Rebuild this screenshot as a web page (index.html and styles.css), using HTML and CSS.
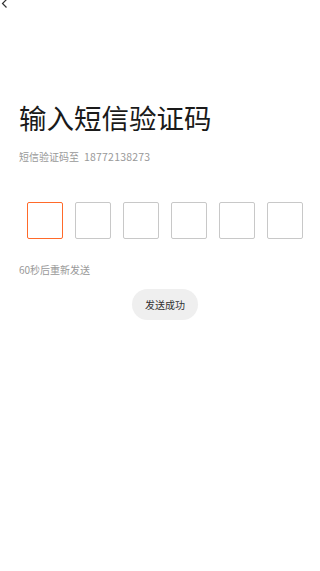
FILE: index.html
```html
<!DOCTYPE html>
<html lang="zh-CN">
<head>
    <meta charset="UTF-8">
    <meta name="viewport" content="width=device-width, initial-scale=1.0">
    <title>输入短信验证码</title>
    <link rel="stylesheet" href="styles.css">
</head>
<body>
    <div class="page">
        <div class="nav">
            <svg class="back" width="8" height="10" viewBox="0 0 8 10">
                <path d="M6.5 0.5 L2.5 4.5 L6.5 8.5" fill="none" stroke="#333" stroke-width="1.2"/>
            </svg>
        </div>
        <h2 class="title">输入短信验证码</h2>
        <p class="hint">短信验证码至<span class="phone">18772138273</span></p>
        <div class="code-row">
            <div class="code-box active"></div>
            <div class="code-box"></div>
            <div class="code-box"></div>
            <div class="code-box"></div>
            <div class="code-box"></div>
            <div class="code-box"></div>
        </div>
        <p class="resend">60秒后重新发送</p>
    </div>
    <div class="toast">发送成功</div>
</body>
</html>
```

FILE: styles.css
```css
body {
    font-family: "Noto Sans CJK SC", "Noto Sans", sans-serif;
    background-color: #fff;
    color: #222;
    margin: 0;
}
.page {
    padding: 0 19px;
}
.nav {
    height: 10px;
    margin: 0 -19px;
}
.back {
    display: block;
    margin-top: -1px;
}
.title {
    font-size: 27.5px;
    font-weight: normal;
    line-height: 40px;
    margin: 88px 0 0;
    color: #1a1a1a;
}
.hint {
    font-size: 10px;
    line-height: 14px;
    color: #999;
    margin: 13px 0 0;
}
.phone {
    margin-left: 5px;
    font-size: 10.5px;
    letter-spacing: 0.2px;
}
.code-row {
    display: flex;
    gap: 12px;
    padding-left: 8px;
    margin: 38px -19px 0 0;
}
.code-box {
    flex-shrink: 0;
    width: 34px;
    height: 35px;
    border: 1px solid #c8c8c8;
    border-radius: 2px;
}
.code-box.active {
    border-color: #ff6a2a;
}
.resend {
    font-size: 10px;
    line-height: 14px;
    color: #999;
    margin: 24px 0 0;
}
.toast {
    position: absolute;
    left: 132px;
    top: 289px;
    width: 66px;
    height: 31px;
    border-radius: 16px;
    background-color: #efefef;
    color: #333;
    font-size: 10px;
    line-height: 31px;
    text-align: center;
}
```
